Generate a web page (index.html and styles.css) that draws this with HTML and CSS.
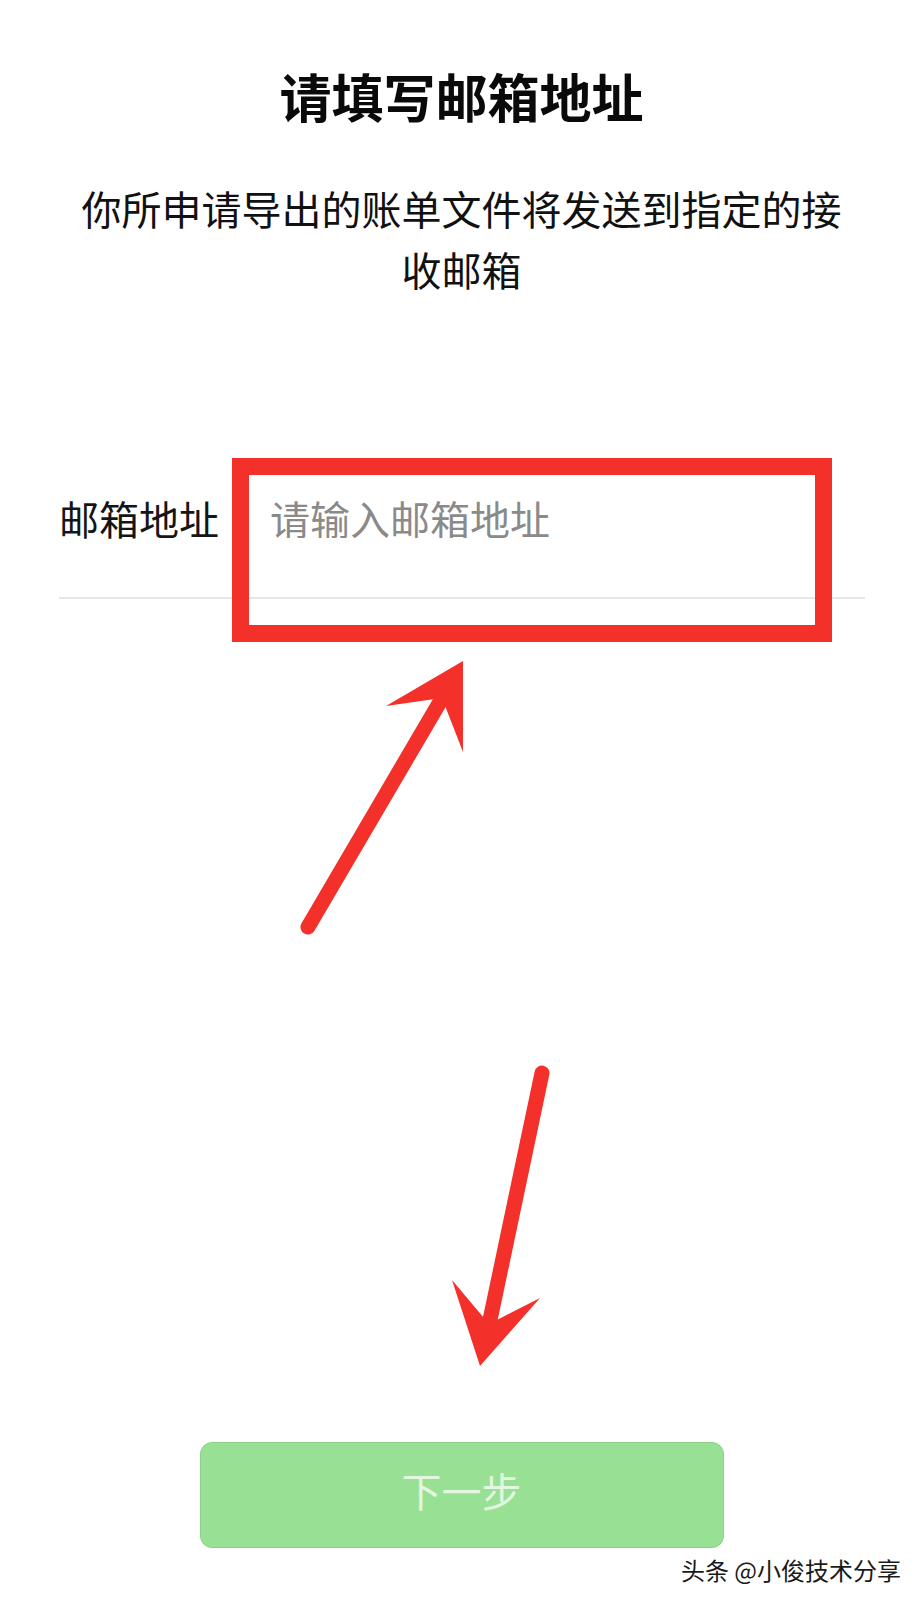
FILE: index.html
```html
<!DOCTYPE html>
<html lang="zh-CN">
<head>
<meta charset="utf-8">
<title>请填写邮箱地址</title>
<link rel="stylesheet" href="styles.css">
</head>
<body>
<main class="page">
  <h1 class="title">请填写邮箱地址</h1>
  <p class="desc">你所申请导出的账单文件将发送到指定的接收邮箱</p>
  <div class="field">
    <label class="field-label" for="email">邮箱地址</label>
    <input class="field-input" id="email" type="email" placeholder="请输入邮箱地址">
  </div>
  <button class="next-btn" type="button">下一步</button>
</main>

<!-- annotation layer -->
<div class="mark-box"></div>
<svg class="mark-arrows" width="923" height="1602" viewBox="0 0 923 1602">
  <g fill="#f3302a" stroke="#f3302a">
    <line x1="308" y1="927" x2="444" y2="695" stroke-width="15" stroke-linecap="round"/>
    <polygon points="463,661 386,706 442,698 463,752" stroke="none"/>
    <line x1="542" y1="1073" x2="490" y2="1320" stroke-width="15" stroke-linecap="round"/>
    <polygon points="480,1366 452,1280 489,1324 540,1298" stroke="none"/>
  </g>
</svg>
<div class="watermark">头条 @小俊技术分享</div>
</body>
</html>
```

FILE: styles.css
```css
html, body {
  margin: 0;
  padding: 0;
  background: #ffffff;
}

body {
  position: relative;
  width: 923px;
  height: 1602px;
  overflow: hidden;
  font-family: "Noto Sans CJK SC", "Noto Sans", sans-serif;
  color: #111111;
}

.page {
  display: flex;
  flex-direction: column;
}

.title {
  margin: 66px 0 0;
  font-size: 52px;
  line-height: 60px;
  font-weight: 700;
  text-align: center;
  color: #0a0a0a;
}

.desc {
  margin: 52px 0 0;
  padding: 0 70px;
  font-size: 40px;
  line-height: 61px;
  font-weight: 400;
  text-align: center;
  color: #111111;
}

.field {
  display: flex;
  align-items: center;
  margin: 198px 58px 0 59px;
  padding-bottom: 59px;
  border-bottom: 2px solid #e6e6e6;
}

.field-label {
  flex: 0 0 211px;
  font-size: 40px;
  line-height: 40px;
  color: #151515;
}

.field-input {
  flex: 1;
  min-width: 0;
  margin: 0;
  padding: 0;
  border: none;
  outline: none;
  background: transparent;
  font-family: inherit;
  font-size: 40px;
  line-height: 40px;
  height: 40px;
  color: #111111;
}

.field-input::placeholder {
  color: #8a8a8a;
}

.next-btn {
  align-self: center;
  width: 524px;
  height: 106px;
  margin-top: 843px;
  padding: 0 0 10px;
  border: 1px solid #8cd088;
  border-radius: 12px;
  background: #98e094;
  font-family: inherit;
  font-size: 40px;
  color: #e2f6e0;
  cursor: default;
}

/* red outline drawn over the input */
.mark-box {
  position: absolute;
  left: 232px;
  top: 458px;
  width: 600px;
  height: 184px;
  box-sizing: border-box;
  border: 17px solid #f3302a;
}

.mark-arrows {
  position: absolute;
  left: 0;
  top: 0;
  pointer-events: none;
}

.watermark {
  position: absolute;
  right: 22px;
  top: 1557px;
  font-size: 24px;
  line-height: 26px;
  color: #1a1a1a;
  text-shadow: 0 0 2px #ffffff, 0 0 2px #ffffff;
}
```
